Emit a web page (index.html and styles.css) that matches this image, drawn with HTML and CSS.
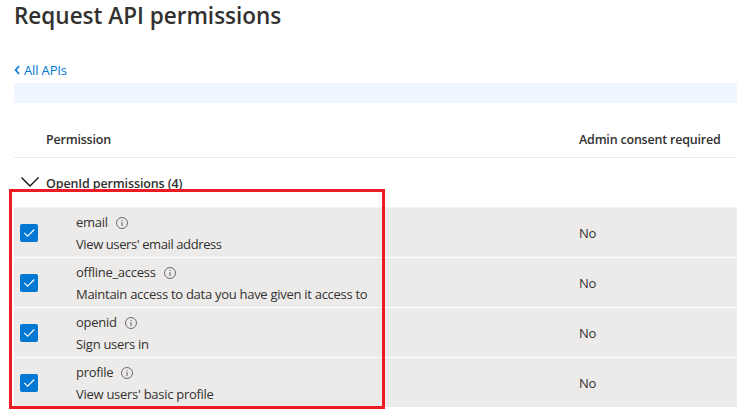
FILE: index.html
```html
<!DOCTYPE html>
<html lang="en">
<head>
<meta charset="utf-8">
<title>Request API permissions</title>
<link rel="stylesheet" href="styles.css">
</head>
<body>
<svg class="defs" aria-hidden="true">
  <symbol id="check" viewBox="0 0 18 18"><path d="M4.2 8.8 7.6 12.2 14.3 5.5" fill="none" stroke="#fff" stroke-width="1.1"/></symbol>
  <symbol id="info" viewBox="0 0 12 12"><circle cx="6" cy="6" r="5.5" fill="none" stroke="#605e5c" stroke-width=".9"/><path d="M6 5v4M6 3v1" stroke="#605e5c" stroke-width="1"/></symbol>
</svg>
<main class="panel">
  <h1 class="title">Request API permissions</h1>
  <a class="back"><svg class="back-icon" viewBox="0 0 6 10"><path d="M5 1 1.6 5 5 9" fill="none" stroke="#0078d4" stroke-width="1.7"/></svg><span>All APIs</span></a>
  <div class="notice"></div>
  <div class="head">
    <span class="name">Permission</span>
    <span>Admin consent required</span>
  </div>
  <div class="group">
    <svg class="chevron" viewBox="0 0 20 12"><path d="M1.5 1.5 10 10 18.5 1.5" fill="none" stroke="#111" stroke-width="1.4"/></svg>
    <span>OpenId permissions (4)</span>
  </div>
  <div class="rows">
    <div class="row">
      <span class="box"><svg viewBox="0 0 18 18"><use href="#check"/></svg></span>
      <div class="info"><div class="line"><span>email</span><svg class="i"><use href="#info"/></svg></div><div class="line tight">View users' email address</div></div>
      <span class="no">No</span>
    </div>
    <div class="row">
      <span class="box"><svg viewBox="0 0 18 18"><use href="#check"/></svg></span>
      <div class="info"><div class="line"><span>offline_access</span><svg class="i"><use href="#info"/></svg></div><div class="line">Maintain access to data you have given it access to</div></div>
      <span class="no">No</span>
    </div>
    <div class="row">
      <span class="box"><svg viewBox="0 0 18 18"><use href="#check"/></svg></span>
      <div class="info"><div class="line"><span>openid</span><svg class="i"><use href="#info"/></svg></div><div class="line">Sign users in</div></div>
      <span class="no">No</span>
    </div>
    <div class="row">
      <span class="box"><svg viewBox="0 0 18 18"><use href="#check"/></svg></span>
      <div class="info"><div class="line"><span>profile</span><svg class="i"><use href="#info"/></svg></div><div class="line">View users' basic profile</div></div>
      <span class="no">No</span>
    </div>
  </div>
</main>
<div class="highlight"></div>
</body>
</html>
```
FILE: styles.css
```css
* { box-sizing: border-box; }
body {
  margin: 0;
  height: 409px;
  overflow: hidden;
  position: relative;
  background: #fff;
  color: #323130;
  font: 13px/22px "Open Sans", "Noto Sans", sans-serif;
  letter-spacing: -0.28px;
  white-space: nowrap;
}
.defs { position: absolute; width: 0; height: 0; }
.panel { padding-left: 14px; }
.title { margin: 0; height: 59px; font-size: 22.5px; font-weight: 600; line-height: 31px; letter-spacing: 0; color: #323130; }
.back { display: flex; align-items: center; gap: 4px; height: 24px; padding-bottom: 2px; color: #0078d4; letter-spacing: -0.15px; }
.back-icon { width: 6px; height: 10px; }
.notice { height: 20px; background: #eff6ff; }
.head {
  display: flex;
  align-items: center;
  height: 55px;
  padding: 20px 0 0 32px;
  border-bottom: 1px solid #eaeaea;
  font-size: 12.5px;
  font-weight: 600;
  letter-spacing: -0.2px;
}
.name { width: 533px; }
.group { display: flex; align-items: center; height: 49px; padding: 3px 0 0 6px; gap: 6px; font-size: 12.5px; font-weight: 600; letter-spacing: -0.12px; }
.chevron { width: 20px; height: 12px; margin-top: -5px; }
.row { display: flex; align-items: center; height: 50px; background: #edebe9; border-top: 1px solid #fff; }
.row:first-child { border-top-color: #f5f4f3; }
.box { width: 18px; height: 18px; margin: 1px 38px 0 6px; background: #0078d4; border-radius: 2px; }
.box svg { display: block; width: 18px; height: 18px; }
.info { width: 503px; padding-top: 1px; }
.line { display: flex; align-items: center; gap: 8px; height: 22px; }
.tight { letter-spacing: -0.4px; }
.i { width: 12px; height: 12px; margin-top: 1px; }
.no { padding-top: 1px; }
.highlight { position: absolute; left: 9px; top: 189px; width: 376px; height: 220px; border: 3px solid #ed1c24; }
```
